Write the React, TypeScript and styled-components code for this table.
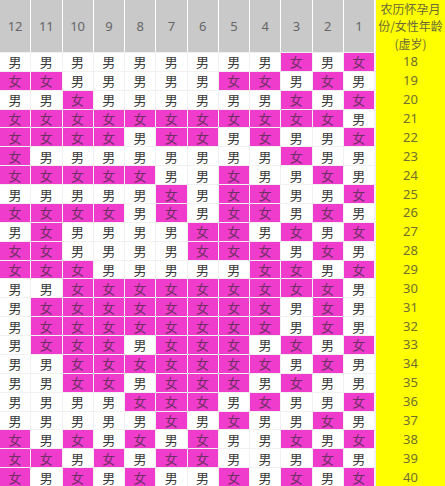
import { Fragment } from 'react';
import styled, { createGlobalStyle } from 'styled-components';

const GlobalStyle = createGlobalStyle`
  html, body {
    margin: 0;
    padding: 0;
    background: #ffffff;
  }
`;

const ROWS: string[] = [
  '男男男男男男男男男女男女',
  '女女男男男男男女女男女男',
  '男男女男男男男男男女男女',
  '女女女女女女女女女女女男',
  '女女女女男女女男女男男女',
  '女男男男男男男男男女男男',
  '女女女女女男男女男男女男',
  '男男男男男女男女女男男女',
  '女女女女男女男女女男女男',
  '男女男男男男女女男女男女',
  '女女男男男男女女女男女男',
  '女女女男男男男男女女男女',
  '男男女女女女女女女女女男',
  '男女女女女女女女女男女男',
  '男女女女女女女女女男女男',
  '男女女女男女女女男女男女',
  '男男女女女女女女女男女男',
  '男男女女男女女女男女男男',
  '男男男男女女女男女男男女',
  '男男男男男女男女男男女男',
  '女男女男女男女男男女男女',
  '女女男女男女女男男男女男',
  '女男女男女男男女男女男女',
];

const MONTHS = [12, 11, 10, 9, 8, 7, 6, 5, 4, 3, 2, 1];

const Chart = styled.div`
  display: grid;
  grid-template-columns: repeat(12, 1fr) 70px;
  grid-template-rows: 52px repeat(23, 1fr);
  gap: 1px;
  width: 445px;
  height: 486px;
  background: #f1f1f1;
  font-family: 'Noto Sans', 'Noto Sans CJK SC', sans-serif;
`;

const HeadCell = styled.div`
  display: flex;
  align-items: center;
  justify-content: center;
  background: #c9c9c9;
  color: #666666;
  font-size: 13px;
  border-right: 1px solid #ffffff;
  margin-right: -1px;
`;

const AgeHead = styled.div`
  display: flex;
  align-items: center;
  justify-content: center;
  text-align: center;
  white-space: nowrap;
  background: #ffff00;
  color: #6a6a3a;
  font-family: 'Noto Sans CJK SC', sans-serif;
  font-size: 12px;
  line-height: 17.4px;
  margin-left: 1px;
`;

const Cell = styled.div<{ $girl: boolean }>`
  display: flex;
  align-items: center;
  justify-content: center;
  background: ${(p) => (p.$girl ? '#ef3ccc' : '#ffffff')};
  color: ${(p) => (p.$girl ? '#6e2f63' : '#3a3a3a')};
  font-family: 'Noto Sans CJK SC', sans-serif;
  font-size: 13px;
  line-height: 1;
`;

const AgeCell = styled.div`
  display: flex;
  align-items: center;
  justify-content: center;
  background: #ffff00;
  color: #707030;
  font-size: 13px;
  margin-left: 1px;
  margin-top: -1px;
`;

const App = () => (
  <>
    <GlobalStyle />
    <Chart>
      {MONTHS.map((m) => (
        <HeadCell key={m}>{m}</HeadCell>
      ))}
      <AgeHead>
        农历怀孕月
        <br />
        份/女性年龄
        <br />
        (虚岁)
      </AgeHead>
      {ROWS.map((row, i) => (
        <Fragment key={i}>
          {Array.from(row).map((ch, j) => (
            <Cell key={j} $girl={ch === '女'}>
              {ch}
            </Cell>
          ))}
          <AgeCell>{18 + i}</AgeCell>
        </Fragment>
      ))}
    </Chart>
  </>
);

export default App;
